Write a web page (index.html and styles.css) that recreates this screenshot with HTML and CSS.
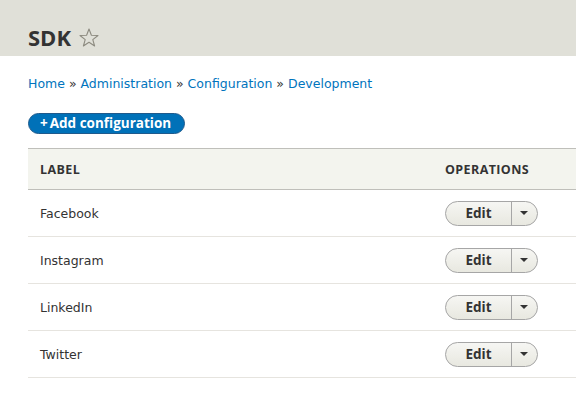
FILE: index.html
```html
<!DOCTYPE html>
<html>
<head>
<meta charset="utf-8">
<link rel="stylesheet" href="styles.css">
</head>
<body>
<header class="page-header">
  <h1 class="page-title">SDK <svg class="star" width="20" height="19" viewBox="0 0 20 19"><polygon points="10,1 12.4,7.3 19,7.5 13.8,11.6 15.6,18 10,14.3 4.4,18 6.2,11.6 1,7.5 7.6,7.3" fill="none" stroke="#8d8b80" stroke-width="1.1" stroke-linejoin="round"/></svg></h1>
</header>
<main class="content">
  <nav class="breadcrumb">
    <a href="#">Home</a> » <a href="#">Administration</a> » <a href="#">Configuration</a> » <a href="#">Development</a>
  </nav>
  <div class="actions">
    <a class="button-action" href="#">+<span class="ba-text">Add configuration</span></a>
  </div>
  <table class="listing">
    <colgroup><col class="c-label"><col class="c-ops"></colgroup>
    <thead>
      <tr><th>Label</th><th>Operations</th></tr>
    </thead>
    <tbody>
      <tr><td>Facebook</td><td class="col-ops"><span class="dropbutton"><span class="db-main">Edit</span><span class="db-toggle"><span class="arrow"></span></span></span></td></tr>
      <tr><td>Instagram</td><td class="col-ops"><span class="dropbutton"><span class="db-main">Edit</span><span class="db-toggle"><span class="arrow"></span></span></span></td></tr>
      <tr><td>LinkedIn</td><td class="col-ops"><span class="dropbutton"><span class="db-main">Edit</span><span class="db-toggle"><span class="arrow"></span></span></span></td></tr>
      <tr><td>Twitter</td><td class="col-ops"><span class="dropbutton"><span class="db-main">Edit</span><span class="db-toggle"><span class="arrow"></span></span></span></td></tr>
    </tbody>
  </table>
</main>
</body>
</html>
```
FILE: styles.css
```css
html, body { margin: 0; padding: 0; background: #fff; }
body {
  font-family: "DejaVu Sans", Verdana, sans-serif;
  font-size: 12.5px;
  color: #333;
  overflow: hidden;
}
.page-header {
  background: #e0e0d8;
  height: 56px;
  padding: 0 28px;
  box-sizing: border-box;
  display: flex;
  align-items: flex-end;
}
.page-title {
  margin: 0 0 6px;
  font-family: "Open Sans", sans-serif;
  font-size: 22px;
  font-weight: bold;
  color: #333;
  line-height: 26px;
  display: flex;
  align-items: center;
  gap: 8px;
}
.star { display: block; margin-top: 1px; }
.content { padding: 0 0 0 28px; }
.breadcrumb { margin-top: 20px; line-height: 16px; color: #333; }
.breadcrumb a { color: #0074bd; text-decoration: none; }
.actions { margin-top: 21px; line-height: 0; }
.button-action {
  display: inline-block;
  background: #0071b8;
  border: 1px solid #1f5a8c;
  border-radius: 11px;
  color: #fff;
  font-family: "Open Sans", sans-serif;
  font-size: 13.5px;
  font-weight: bold;
  text-decoration: none;
  padding: 0 13px 0 11px;
  line-height: 19px;
  height: 19px;
}
.ba-text { margin-left: 2px; }
.listing {
  margin-top: 14px;
  width: 548px;
  border-collapse: collapse;
  table-layout: fixed;
}
.c-label { width: 405px; }
.c-ops { width: 143px; }
.listing th {
  background: #f3f4ee;
  border-top: 1px solid #bfbfba;
  border-bottom: 1px solid #bfbfba;
  text-align: left;
  text-transform: uppercase;
  font-family: "Open Sans", sans-serif;
  font-size: 12.5px;
  letter-spacing: 0.4px;
  font-weight: bold;
  color: #333;
  height: 40px;
  padding: 0 12px;
}
.listing td {
  height: 46px;
  padding: 0 12px;
  border-bottom: 1px solid #e6e4df;
  color: #333;
}
.dropbutton {
  display: inline-flex;
  height: 23px;
  border: 1px solid #a6a6a6;
  border-radius: 13px;
  background: linear-gradient(#f6f6f3, #e8e8e0);
  overflow: hidden;
  vertical-align: middle;
}
.db-main {
  width: 65px;
  text-align: center;
  font-family: "Open Sans", sans-serif;
  font-size: 13.5px;
  font-weight: bold;
  line-height: 23px;
  color: #333;
  border-right: 1px solid #a6a6a6;
}
.db-toggle {
  width: 25px;
  display: flex;
  align-items: center;
  justify-content: center;
}
.arrow {
  width: 0; height: 0;
  border-left: 4px solid transparent;
  border-right: 4px solid transparent;
  border-top: 4px solid #333;
  margin-right: 2px;
}
```
